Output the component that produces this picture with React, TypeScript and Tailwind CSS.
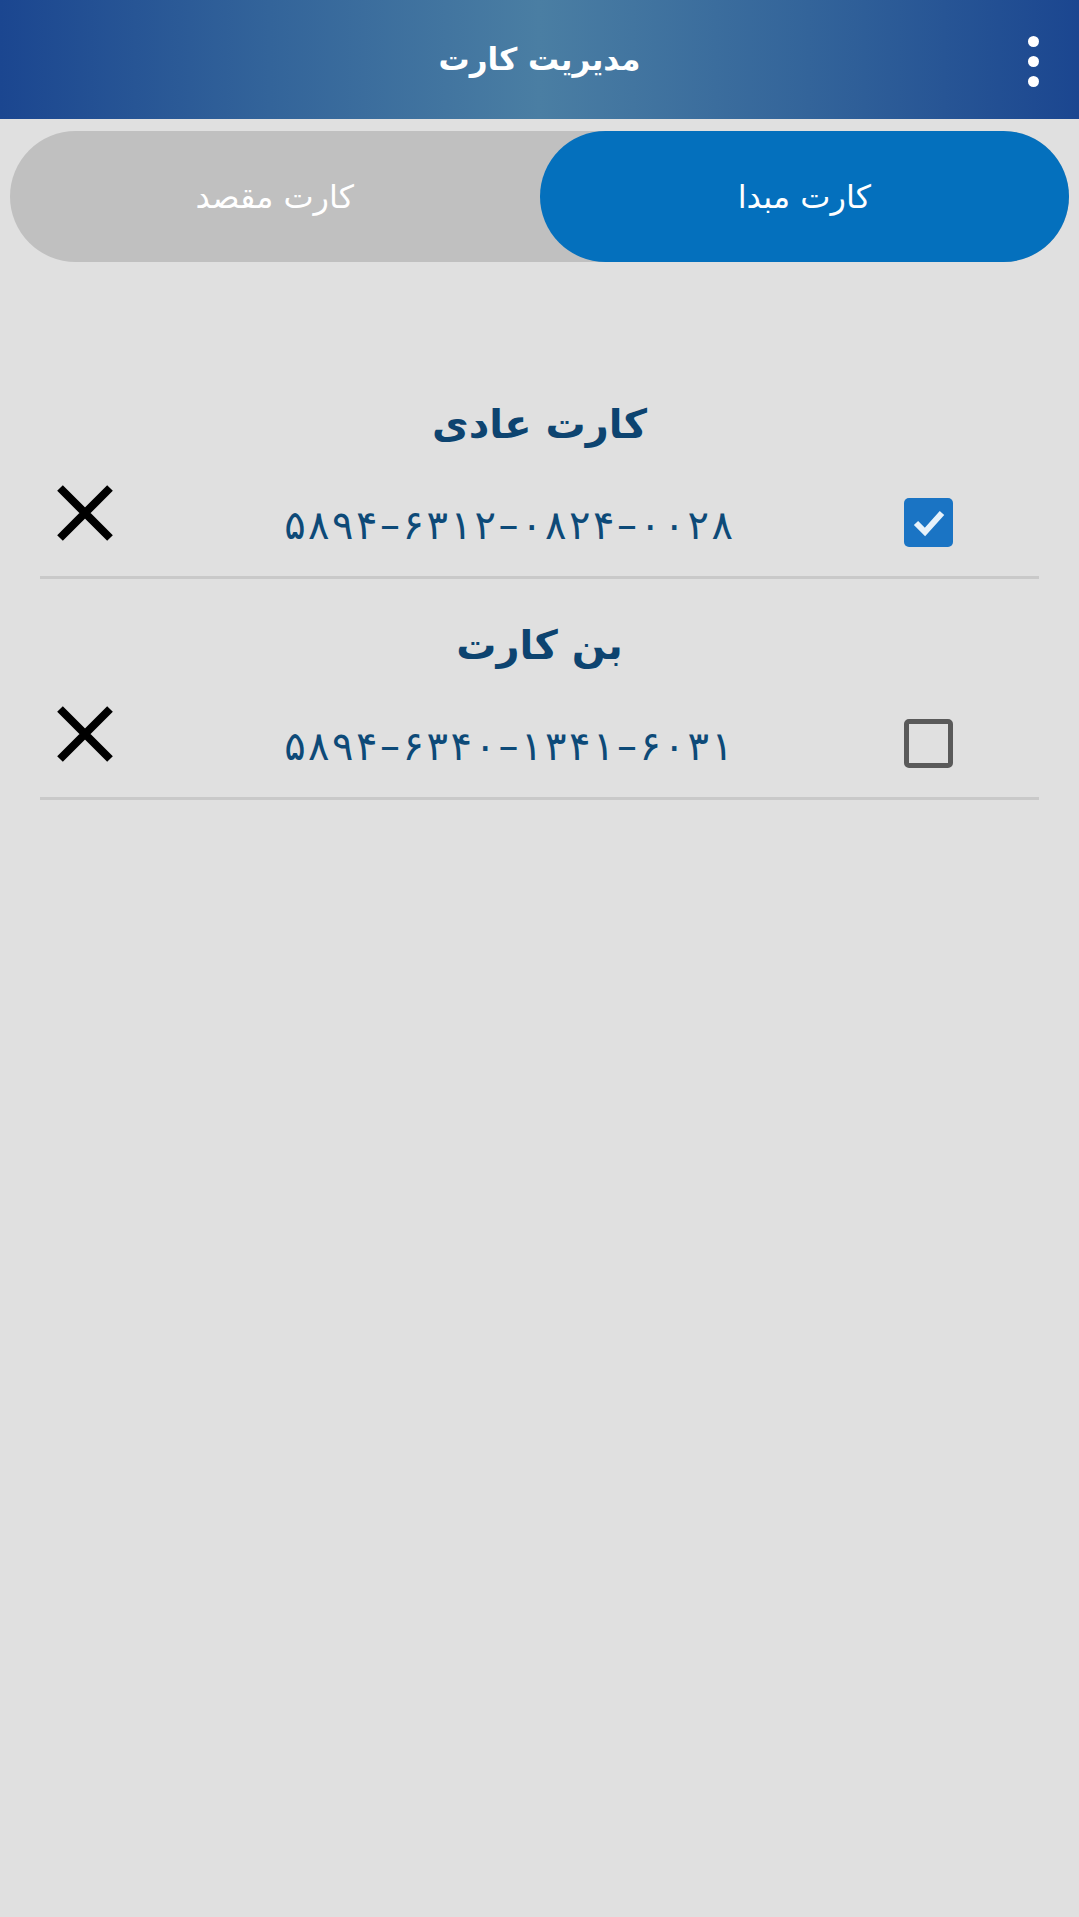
import React, { useState } from 'react';

interface CardItem {
  id: string;
  title: string;
  number: string;
}

const cards: CardItem[] = [
  { id: 'normal', title: 'کارت عادی', number: '۵۸۹۴–۶۳۱۲–۰۸۲۴–۰۰۲۸' },
  { id: 'bon', title: 'بن کارت', number: '۵۸۹۴–۶۳۴۰–۱۳۴۱–۶۰۳۱' },
];

const CloseIcon = () => (
  <svg width="56" height="56" viewBox="0 0 56 56">
    <path d="M3 3 L53 53 M53 3 L3 53" stroke="#000" strokeWidth="8" strokeLinecap="butt" />
  </svg>
);

const CheckBox = ({ checked, onClick }: { checked: boolean; onClick: () => void }) =>
  checked ? (
    <button onClick={onClick} className="mt-[8px] w-[49px] h-[49px] rounded-[5px] bg-[#1a74c4] flex items-center justify-center">
      <svg width="38" height="38" viewBox="0 0 38 38">
        <path d="M6 20 L15 29 L32 10" stroke="#e6f2fb" strokeWidth="6" fill="none" />
      </svg>
    </button>
  ) : (
    <button onClick={onClick} className="mt-[8px] w-[49px] h-[49px] rounded-[5px] border-[5px] border-[#5a5a5a]" />
  );

// Arabic-script digits ignore letter-spacing, so space them by hand
const CardNumber = ({ value }: { value: string }) => (
  <span dir="ltr" className="flex gap-[2.5px] text-[#0d4a78] text-[40px] pt-[14px]">
    {Array.from(value).map((ch, i) => (
      <span key={i}>{ch}</span>
    ))}
  </span>
);

export default function App() {
  const [tab, setTab] = useState<'src' | 'dst'>('src');
  const [selected, setSelected] = useState('normal');

  return (
    <div
      dir="rtl"
      className="w-[1079px] h-[1917px] bg-[#e0e0e0] flex flex-col"
      style={{ fontFamily: '"DejaVu Sans", "Noto Sans", sans-serif' }}
    >
      {/* Header */}
      <div className="relative h-[119px] shrink-0 flex items-center justify-center bg-[linear-gradient(90deg,#1b4690_0%,#33649a_25%,#4a7ea3_50%,#33649a_75%,#1b4690_100%)]">
        <h1 className="text-white text-[31px] font-bold">مدیریت کارت</h1>
        <div className="absolute right-[40px] top-[36px] flex flex-col gap-[9px]">
          <span className="block w-[11px] h-[11px] rounded-full bg-white" />
          <span className="block w-[11px] h-[11px] rounded-full bg-white" />
          <span className="block w-[11px] h-[11px] rounded-full bg-white" />
        </div>
      </div>

      {/* Tabs */}
      <div className="px-[10px] mt-[12px]">
        <div className="h-[131px] rounded-full bg-[#c0c0c0] flex">
          <button
            onClick={() => setTab('src')}
            className={`flex-1 h-full rounded-full text-white text-[32px] ${tab === 'src' ? 'bg-[#0470bd]' : ''}`}
          >
            کارت مبدا
          </button>
          <button
            onClick={() => setTab('dst')}
            className={`flex-1 h-full rounded-full text-white text-[32px] ${tab === 'dst' ? 'bg-[#0470bd]' : ''}`}
          >
            کارت مقصد
          </button>
        </div>
      </div>

      {/* Cards */}
      <div className="mt-[96px] px-[40px]">
        {cards.map((c) => (
          <div key={c.id} className="pt-[36px] border-b-[3px] border-[#c9c9c9]">
            <h2 className="h-[60px] flex items-center justify-center text-[#0d4470] text-[40px] font-bold">{c.title}</h2>
            <div className="h-[80px] mt-[24px] mb-[18px] flex items-center justify-between pl-[17px] pr-[86px]">
              <CheckBox checked={selected === c.id} onClick={() => setSelected(c.id)} />
              <CardNumber value={c.number} />
              <button className="-mt-[10px]">
                <CloseIcon />
              </button>
            </div>
          </div>
        ))}
      </div>
    </div>
  );
}
